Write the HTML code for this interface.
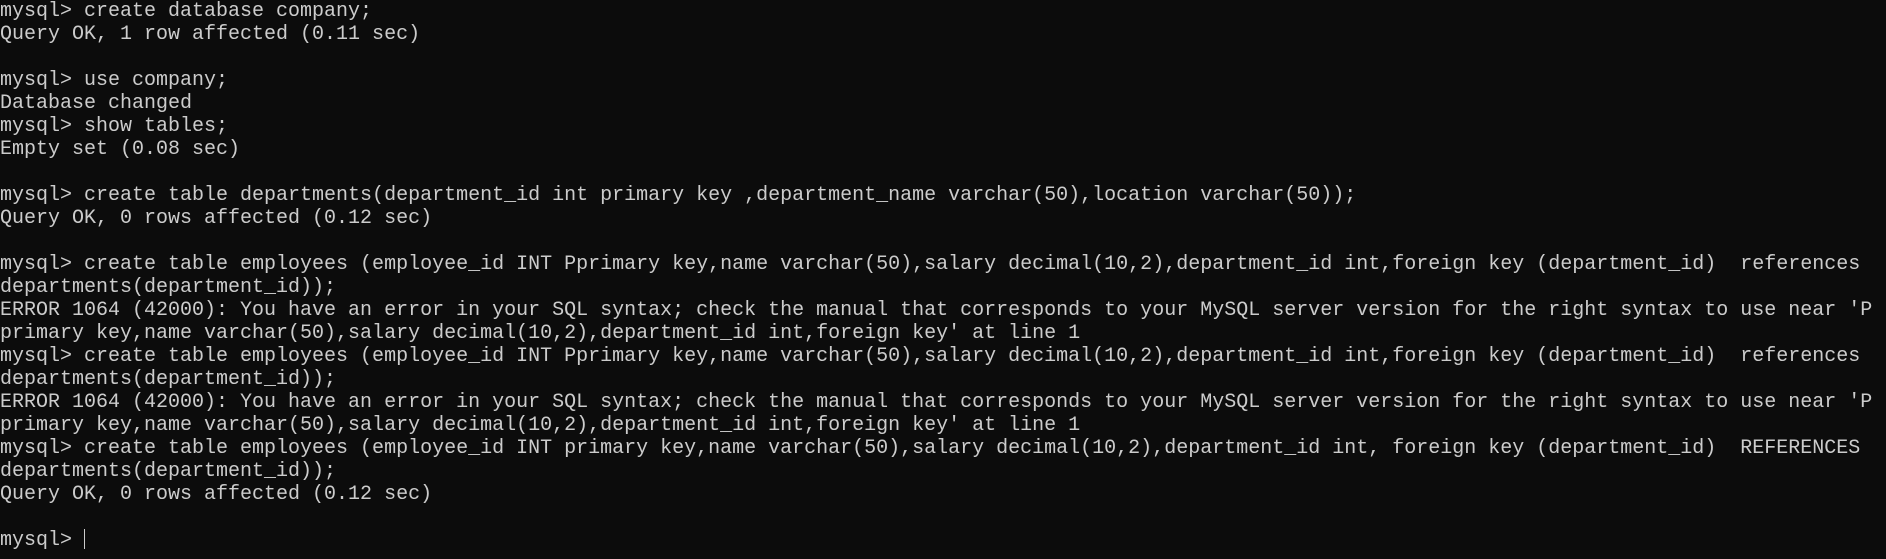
<!DOCTYPE html>
<html><head><meta charset="utf-8"><style>
html,body{margin:0;padding:0;background:#0c0c0c;width:1886px;height:559px;overflow:hidden}
pre{margin:0;padding:0 0 0 0;font-family:"Liberation Mono",monospace;font-size:20px;line-height:23px;color:#cccccc;white-space:pre}
.cur{display:inline-block;width:1px;height:20px;background:#cccccc;vertical-align:-4px}
</style></head><body><pre>mysql&gt; create database company;
Query OK, 1 row affected (0.11 sec)

mysql&gt; use company;
Database changed
mysql&gt; show tables;
Empty set (0.08 sec)

mysql&gt; create table departments(department_id int primary key ,department_name varchar(50),location varchar(50));
Query OK, 0 rows affected (0.12 sec)

mysql&gt; create table employees (employee_id INT Pprimary key,name varchar(50),salary decimal(10,2),department_id int,foreign key (department_id)  references
departments(department_id));
ERROR 1064 (42000): You have an error in your SQL syntax; check the manual that corresponds to your MySQL server version for the right syntax to use near 'P
primary key,name varchar(50),salary decimal(10,2),department_id int,foreign key' at line 1
mysql&gt; create table employees (employee_id INT Pprimary key,name varchar(50),salary decimal(10,2),department_id int,foreign key (department_id)  references
departments(department_id));
ERROR 1064 (42000): You have an error in your SQL syntax; check the manual that corresponds to your MySQL server version for the right syntax to use near 'P
primary key,name varchar(50),salary decimal(10,2),department_id int,foreign key' at line 1
mysql&gt; create table employees (employee_id INT primary key,name varchar(50),salary decimal(10,2),department_id int, foreign key (department_id)  REFERENCES
departments(department_id));
Query OK, 0 rows affected (0.12 sec)

mysql&gt; <span class="cur"></span></pre></body></html>
